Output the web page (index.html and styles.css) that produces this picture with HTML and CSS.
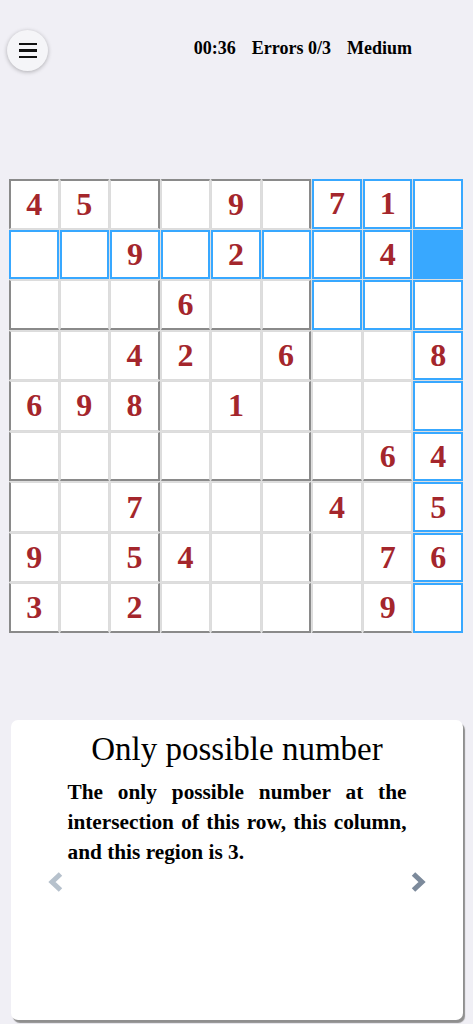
FILE: index.html
```html
<!DOCTYPE html>
<html lang="en">
<head>
<meta charset="UTF-8">
<title>Sudoku</title>
<link rel="stylesheet" href="styles.css">
</head>

<body>

<div class="topbar">
<button class="menuBtn" aria-label="Menu">
<span></span><span></span><span></span>
</button>
<div class="status">
<span id="clock">00:36</span>
<span>Errors 0/3</span>
<span>Medium</span>
</div>
</div>

<div class="board" id="board"></div>

<div class="hintCard">
<h2>Only possible number</h2>
<p>The only possible number at the intersection of this row, this column, and this region is 3.</p>
<div class="hintNav">
<svg class="prev" width="16" height="22" viewBox="0 0 16 22"><polyline points="13.5,3 5,11 13.5,19" fill="none" stroke="currentColor" stroke-width="5"/></svg>
<svg class="next" width="16" height="22" viewBox="0 0 16 22"><polyline points="2.5,3 11,11 2.5,19" fill="none" stroke="currentColor" stroke-width="5"/></svg>
</div>
</div>

<script>

const puzzle=[
"45..9.71.",
"..9.2..4.",
"...6.....",
"..42.6..8",
"698.1....",
".......64",
"..7...4.5",
"9.54...76",
"3.2....9."
]

let selRow=1
let selCol=8

let board=document.getElementById("board")

for(let r=0;r<9;r++){
for(let c=0;c<9;c++){

let cell=document.createElement("div")
cell.className="cell"

if(c===0)cell.classList.add("l")
if(r===0)cell.classList.add("t")
if(c%3===2)cell.classList.add("r")
if(r%3===2)cell.classList.add("b")

let sameBox=Math.floor(r/3)===Math.floor(selRow/3) && Math.floor(c/3)===Math.floor(selCol/3)
if(r===selRow || c===selCol || sameBox)cell.classList.add("hl")
if(r===selRow && c===selCol)cell.classList.add("sel")

let ch=puzzle[r][c]
if(ch!==".")cell.innerText=ch

board.appendChild(cell)

}
}

</script>

</body>
</html>
```

FILE: styles.css
```css
body{
margin:0;
background:#f0eff5;
font-family:"Liberation Serif",serif;
color:#000;
height:1024px;
overflow:hidden;
}

.topbar{
display:flex;
align-items:flex-start;
padding:30px 61px 0 7px;
}

.menuBtn{
width:41px;
height:41px;
border:none;
border-radius:50%;
background:#f5f5f8;
box-shadow:0 1px 4px rgba(0,0,0,0.28);
display:flex;
flex-direction:column;
align-items:center;
justify-content:center;
gap:4px;
padding:0;
}

.menuBtn span{
display:block;
width:18px;
height:2.6px;
background:#111;
}

.status{
margin-left:auto;
margin-top:8px;
display:flex;
gap:16px;
font-size:18px;
font-weight:bold;
}

.board{
display:grid;
grid-template-columns:repeat(9,1fr);
grid-template-rows:repeat(9,1fr);
gap:1px;
width:454px;
height:454px;
margin:108px 0 0 9px;
background:#dedede;
}

.cell{
box-sizing:border-box;
background:#fff;
border:1px solid #dcdcdc;
display:flex;
align-items:center;
justify-content:center;
font-size:32px;
font-weight:bold;
color:#a4262c;
}

.cell.l{
border-left:2px solid #8a8a8a;
}

.cell.t{
border-top:2px solid #8a8a8a;
}

.cell.r{
border-right:2px solid #8a8a8a;
}

.cell.b{
border-bottom:2px solid #8a8a8a;
}

.cell.hl{
border:2px solid #38a8ff;
}

.cell.sel{
background:#38a8ff;
}

.hintCard{
box-sizing:border-box;
width:452px;
height:300px;
margin:87px 0 0 11px;
padding-top:11px;
background:#fff;
border-radius:7px;
box-shadow:2px 3px 1px #8f8f8f;
}

.hintCard h2{
margin:0;
font-size:33px;
font-weight:normal;
text-align:center;
}

.hintCard p{
width:339px;
margin:9px auto 0;
font-size:21.3px;
font-weight:bold;
line-height:30px;
text-align:justify;
}

.hintNav{
display:flex;
justify-content:space-between;
padding:0 36px;
margin-top:4px;
}

.prev{
color:#b6c1cc;
}

.next{
color:#7c8a9b;
}
```
